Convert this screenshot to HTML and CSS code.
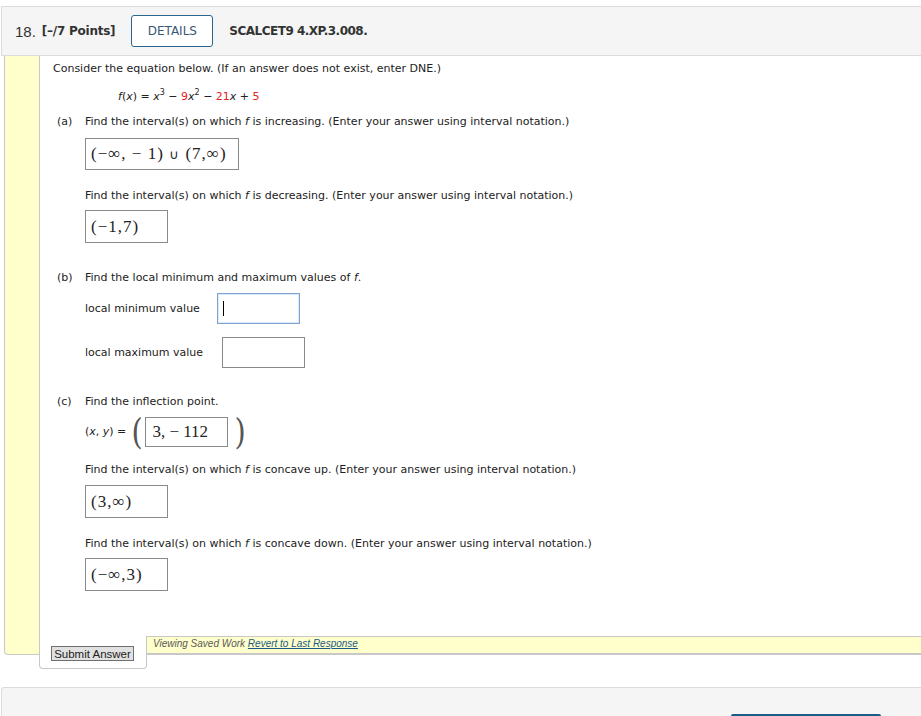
FILE: index.html
```html
<!DOCTYPE html>
<html>
<head>
<meta charset="utf-8">
<link rel="stylesheet" href="styles.css">
</head>
<body>
<div class="question">
  <div class="qhead">
    <span class="qnum">18.</span>
    <span class="points">[–/7 Points]</span>
    <button class="details">DETAILS</button>
    <span class="qcode">SCALCET9 4.XP.3.008.</span>
  </div>
  <div class="qbody">
    <div class="content">
      <p class="intro">Consider the equation below. (If an answer does not exist, enter DNE.)</p>
      <p class="eq"><i>f</i>(<i>x</i>) = <i>x</i><sup>3</sup> − <span class="red">9</span><i>x</i><sup>2</sup> − <span class="red">21</span><i>x</i> + <span class="red">5</span></p>

      <div class="part pa">
        <span class="plabel">(a)</span>
        <span>Find the interval(s) on which <i>f</i> is increasing. (Enter your answer using interval notation.)</span>
      </div>
      <div class="ans ans-wide a1"><span class="math">(−∞, − 1)<span class="cup">∪</span>(7,∞)</span></div>
      <p class="sub s1">Find the interval(s) on which <i>f</i> is decreasing. (Enter your answer using interval notation.)</p>
      <div class="ans a2"><span class="math">(−1,7)</span></div>

      <div class="part pb">
        <span class="plabel">(b)</span>
        <span>Find the local minimum and maximum values of <i>f</i>.</span>
      </div>
      <div class="field fmin">
        <span class="flabel">local minimum value</span>
        <span class="input focus"><span class="caret"></span></span>
      </div>
      <div class="field fmax">
        <span class="flabel">local maximum value</span>
        <span class="input"></span>
      </div>

      <div class="part pc">
        <span class="plabel">(c)</span>
        <span>Find the inflection point.</span>
      </div>
      <div class="point">
        <span class="xy">(<i>x</i>, <i>y</i>) =</span>
        <span class="bigp">(</span>
        <span class="ans a3"><span class="math">3, − 112</span></span>
        <span class="bigp right">)</span>
      </div>
      <p class="sub s2">Find the interval(s) on which <i>f</i> is concave up. (Enter your answer using interval notation.)</p>
      <div class="ans a4"><span class="math">(3,∞)</span></div>
      <p class="sub s3">Find the interval(s) on which <i>f</i> is concave down. (Enter your answer using interval notation.)</p>
      <div class="ans a5"><span class="math">(−∞,3)</span></div>
    </div>
    <div class="footer">
      <div class="submitbox"><button class="submit">Submit Answer</button></div>
      <div class="saved"><i>Viewing Saved Work <a href="#">Revert to Last Response</a></i></div>
    </div>
  </div>
</div>
<div class="nextpanel">
  <div class="nextbtn"></div>
</div>
</body>
</html>
```
FILE: styles.css
```css
html, body {
  margin: 0;
  padding: 0;
  background: #fff;
}
body {
  font-family: "DejaVu Sans", Verdana, sans-serif;
  font-size: 11px;
  color: #222;
  overflow: hidden;
  height: 716px;
}
p { margin: 0; }
.question {
  padding-top: 6px;
}
.qhead {
  margin-left: 1px;
  height: 48px;
  background: #f5f5f5;
  border-top: 1px solid #dcdcdc;
  border-bottom: 1px solid #dcdcdc;
  border-left: 1px solid #dcdcdc;
  display: flex;
  align-items: center;
}
.qnum {
  font-family: "Liberation Sans", Arial, sans-serif;
  font-size: 15px;
  color: #333;
  margin-left: 13px;
}
.points {
  font-weight: bold;
  font-size: 12px;
  letter-spacing: -0.25px;
  color: #333;
  margin-left: 6px;
}
.details {
  margin-left: 16px;
  width: 82px;
  height: 32px;
  background: #fff;
  border: 1px solid #2a6592;
  border-radius: 3px;
  font-family: "DejaVu Sans", sans-serif;
  font-size: 12px;
  color: #3a5876;
  padding: 0;
}
.qcode {
  font-weight: bold;
  font-size: 12px;
  letter-spacing: -0.5px;
  color: #333;
  margin-left: 16px;
}
.qbody {
  margin-left: 4px;
  background: #ffffcc;
  border-left: 1px solid #c8c8c8;
  border-bottom: 1px solid #c8c8c8;
  border-bottom-left-radius: 4px;
  padding-left: 34px;
}
.content {
  background: #fff;
  border-left: 1px solid #c8c8c8;
  padding: 5px 0 45px 13px;
  line-height: 16px;
}
.eq {
  margin-top: 12px;
  margin-left: 65px;
}
.eq sup { font-size: 8px; line-height: 0; vertical-align: 5px; }
.red { color: #e8201c; }
.part {
  display: flex;
  margin-left: 4px;
}
.plabel { width: 28px; }
.pa { margin-top: 9px; }
.pb { margin-top: 27px; }
.pc { margin-top: 26px; }
.sub { margin-left: 32px; }
.s1 { margin-top: 18px; }
.s2 { margin-top: 13px; }
.s3 { margin-top: 18px; }
.ans {
  margin-left: 32px;
  border: 1px solid #8a8a8a;
  display: flex;
  align-items: center;
  padding-left: 5px;
  box-sizing: border-box;
  height: 33px;
  width: 83px;
}
.ans-wide { width: 154px; height: 32px; }
.a1 { margin-top: 8px; }
.a2 { margin-top: 6px; }
.a4 { margin-top: 7px; }
.a5 { margin-top: 6px; }
.math {
  font-family: "Liberation Serif", "DejaVu Serif", serif;
  font-size: 17px;
  letter-spacing: 1px;
  color: #222;
  white-space: pre;
}
.cup { font-family: "DejaVu Sans", sans-serif; font-size: 13px; margin: 0 6px 0 5px; }
.field {
  display: flex;
  align-items: center;
  margin-left: 32px;
}
.fmin { margin-top: 7px; }
.fmax { margin-top: 13px; }
.input {
  display: block;
  width: 83px;
  height: 31px;
  box-sizing: border-box;
  border: 1px solid #8a8a8a;
  background: #fff;
  position: relative;
}
.fmin .input { margin-left: 17px; }
.fmax .input { margin-left: 19px; height: 31px; }
.input.focus {
  border: 1px solid #7ea3cf;
  box-shadow: inset 0 0 0 1px #dbe9f8;
}
.caret {
  position: absolute;
  left: 5px;
  top: 7px;
  width: 1px;
  height: 15px;
  background: #000;
}
.point {
  display: flex;
  align-items: center;
  margin-left: 32px;
  margin-top: 5px;
  height: 34px;
}
.xy { margin-right: 4px; }
.bigp {
  font-family: "DejaVu Serif", "Liberation Serif", serif;
  font-size: 36px;
  font-weight: 200;
  color: #555;
  line-height: 34px;
  transform: scaleX(0.8);
}
.bigp.right { margin-left: 5px; }
.a3 {
  margin-left: 1px;
  width: 83px;
  height: 30px;
  padding-left: 6px;
}
.a3 .math { letter-spacing: 0; }
.footer {
  display: flex;
  align-items: flex-start;
  margin-bottom: -15px;
}
.submitbox {
  width: 108px;
  height: 33px;
  box-sizing: border-box;
  background: #fff;
  border: 1px solid #c8c8c8;
  border-top: none;
  border-radius: 0 0 4px 4px;
  padding: 10px 0 0 11px;
}
.submit {
  display: block;
  width: 83px;
  height: 15px;
  padding: 0;
  background: #e1e1e1;
  border: 1px solid #707070;
  font-family: "Liberation Sans", Arial, sans-serif;
  font-size: 11.5px;
  line-height: 12px;
  color: #222;
}
.saved {
  flex: 1;
  height: 18px;
  box-sizing: border-box;
  background: #ffffcc;
  border-top: 1px solid #c8c8c8;
  border-bottom: 1px solid #c8c8c8;
  font-family: "Liberation Sans", Arial, sans-serif;
  font-size: 10px;
  line-height: 13px;
  color: #5a5a5a;
  padding-left: 6px;
}
.saved a { color: #1b5a86; }
.nextpanel {
  margin-top: 32px;
  margin-left: 1px;
  height: 40px;
  box-sizing: border-box;
  overflow: hidden;
  background: #f5f5f5;
  border-top: 1px solid #dcdcdc;
  border-left: 1px solid #dcdcdc;
  border-top-left-radius: 3px;
  display: flex;
  justify-content: flex-end;
  align-items: flex-start;
  padding-right: 40px;
  padding-top: 26px;
}
.nextbtn {
  flex: none;
  width: 150px;
  height: 20px;
  background: #1a5b8a;
  border-radius: 2px;
}
```
